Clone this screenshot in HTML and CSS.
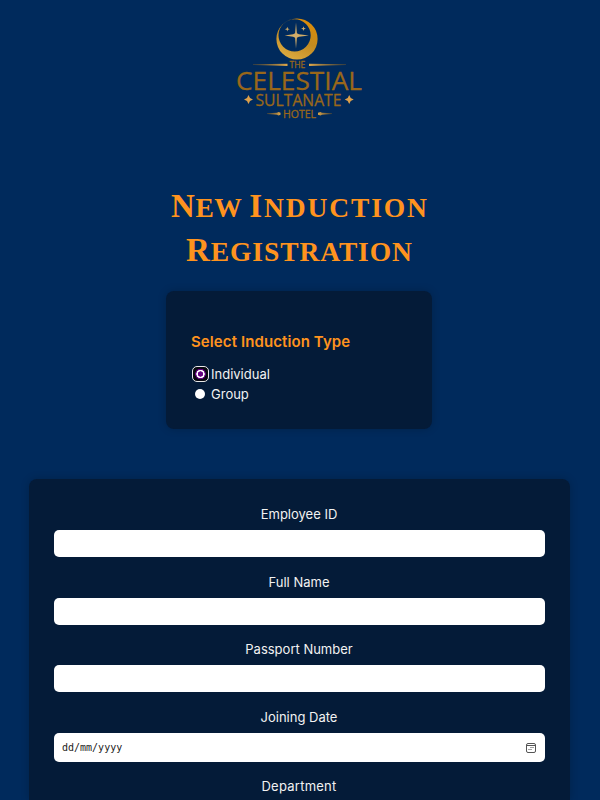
FILE: index.html
```html
<!DOCTYPE html>
<html lang="en">
<head>
<meta charset="utf-8">
<title>New Induction Registration</title>
<link rel="stylesheet" href="styles.css">
</head>
<body>
<header class="brand">
<svg class="logo" viewBox="0 0 150 115" width="150" height="115" role="img" aria-label="The Celestial Sultanate Hotel">
  <defs>
    <linearGradient id="moon" x1="0.3" y1="1" x2="0.8" y2="0"><stop offset="0" stop-color="#dcab42"/><stop offset=".5" stop-color="#c28a20"/><stop offset="1" stop-color="#df8c05"/></linearGradient>
    <linearGradient id="left"><stop offset="0" stop-color="#8b601c" stop-opacity=".5"/><stop offset="1" stop-color="#e0a84a"/></linearGradient>
    <linearGradient id="right"><stop offset="0" stop-color="#e0a84a"/><stop offset="1" stop-color="#8b601c" stop-opacity=".5"/></linearGradient>
  </defs>
  <path fill="url(#moon)" fill-rule="evenodd" d="M72 8.400a20.600 20.600 0 1 1 0 41.200a20.600 20.600 0 1 1 0-41.200zM69.600 9.200a16.100 16.100 0 1 0 0 32.200a16.100 16.100 0 1 0 0-32.200z"/>
  <path fill="#d3ad68" d="M71 12.500l.9 10.800 2 1 10 1.200-10 1.200-2 1-.9 10.800-.9-10.800-2-1-8.500-1.200 8.500-1.200 2-1zM62.300 16.800l.6 1.800 1.800.6-1.800.6-.6 1.800-.6-1.800-1.800-.6 1.800-.6zM78.500 16.300l.6 1.800 1.800.6-1.800.6-.6 1.800-.6-1.800-1.800-.6 1.800-.6z"/>
  <path fill="url(#left)" d="M28 54.200L62.500 53.700v2.400L28 54.900z"/>
  <path fill="url(#right)" d="M121 54.200L84 53.700v2.400l37-1.200z"/>
  <path fill="url(#left)" d="M42 103.200l10-.5 1.500-.7 2 .7v2l-2 .7-1.500-.7-10-.7z"/>
  <path fill="url(#right)" d="M107 103.200l-10-.5-1.500-.7-2.500.7v2l2.500.7 1.500-.7 10-.7z"/>
  <path fill="#dda04a" d="M23.500 85l1.500 3 3 1.500-3 1.500-1.500 3-1.500-3-3-1.500 3-1.500zM124.200 85l1.500 3 3 1.500-3 1.500-1.500 3-1.500-3-3-1.500 3-1.500z"/>
  <g class="logo-text">
    <text x="64.500" y="58.400" font-size="9" textLength="15.800" lengthAdjust="spacingAndGlyphs">THE</text>
    <text x="11" y="80" font-size="25.500" textLength="126" lengthAdjust="spacingAndGlyphs">CELESTIAL</text>
    <text x="30.500" y="96" font-size="16" textLength="86" lengthAdjust="spacingAndGlyphs">SULTANATE</text>
    <text x="58" y="107.500" font-size="10" textLength="33" lengthAdjust="spacingAndGlyphs">HOTEL</text>
  </g>
</svg>
</header>
<main>
<h1><span class="word new">New</span> <span class="word induction">Induction</span><br><span class="word registration">Registration</span></h1>
<section class="card type-card">
  <h2>Select Induction Type</h2>
  <label class="choice"><input type="radio" name="type" class="selected" checked><span>Individual</span></label>
  <label class="choice"><input type="radio" name="type"><span>Group</span></label>
</section>
<form class="card details">
  <div class="field"><label for="eid">Employee ID</label><input id="eid" type="text"></div>
  <div class="field"><label for="name">Full Name</label><input id="name" type="text"></div>
  <div class="field"><label for="pass">Passport Number</label><input id="pass" type="text"></div>
  <div class="field joining"><label>Joining Date</label>
    <div class="date"><span>dd/mm/yyyy</span>
      <svg width="10" height="10" viewBox="0 0 10 10"><rect x=".5" y=".5" width="9" height="9" rx="1.500" fill="none" stroke="#555"/><path d="M1 2.500h8" stroke="#555"/><path d="M4.500 4.500h1M6.500 4.500h1M2.500 6.500h1M4.500 6.500h1" stroke="#444"/></svg>
    </div>
  </div>
  <div class="field department"><label>Department</label></div>
</form>
</main>
</body>
</html>
```
FILE: styles.css
```css
* { box-sizing: border-box; }
html { background: #002a5c; }
body {
  margin: 0;
  height: 800px;
  overflow: hidden;
  background: #002a5c;
  color: #f2f2f2;
  font: 13px/20px Inter, "Open Sans", sans-serif;
}
.brand { height: 185px; padding: 10px 0 0 225px; }
.logo { display: block; }
.logo-text { fill: #99671a; stroke: #99671a; stroke-width: .3px; font-family: "Open Sans", "Noto Sans", sans-serif; }
h1 {
  margin: 0;
  height: 106px;
  padding-right: 2px;
  text-align: center;
  color: #ff931e;
  font: bold 27.500px/42px "Liberation Serif", serif;
  white-space: nowrap;
}
.word { display: inline-block; text-transform: uppercase; }
.word::first-letter { font-size: 33px; }
.new { letter-spacing: .5px; }
.induction { letter-spacing: 1.900px; margin-right: -1.900px; }
.registration { letter-spacing: .900px; margin-right: -.900px; }
.card {
  background: #041b38;
  border-radius: 8px;
  box-shadow: 0 0 8px rgba(0, 0, 0, .2);
}
.type-card { width: 266px; height: 138px; margin: 0 0 0 166px; padding: 39px 25px 0; }
h2 { margin: 0 0 10px; color: #ff931e; font-size: 15px; line-height: 24px; font-weight: 600; letter-spacing: .1px; }
.choice { display: flex; align-items: center; height: 20px; }
.choice input {
  appearance: none;
  width: 10px;
  height: 10px;
  margin: 0 6px 0 4px;
  border-radius: 50%;
  background: #fff;
}
.choice .selected {
  width: 17px;
  height: 16px;
  margin: 0 2px 0 1px;
  border: 1px solid #e8e8e8;
  border-radius: 5px;
  background: radial-gradient(circle, #650080 0 2.400px, #fff 2.900px 3.900px, #650080 4.400px 5px, #080810 5.600px);
}
.details { width: 541px; height: 321px; margin: 50px 0 0 29px; padding: 25px 25px 0; border-radius: 8px 8px 0 0; }
.field { height: 67.700px; text-align: center; }
.field.joining { height: 69px; }
.field label { display: block; height: 26px; padding-right: 1px; }
.department, .department label { height: 20px; }
.department { letter-spacing: .25px; }
.field input, .date {
  display: block;
  width: 491px;
  height: 27px;
  margin: 0;
  border: 0;
  border-radius: 5px;
  background: #fff;
}
.date {
  display: flex;
  height: 28.500px;
  align-items: center;
  justify-content: space-between;
  padding: 1px 9px 0 8px;
  color: #222;
  font: 10px/14px "DejaVu Sans Mono", monospace;
}
```
